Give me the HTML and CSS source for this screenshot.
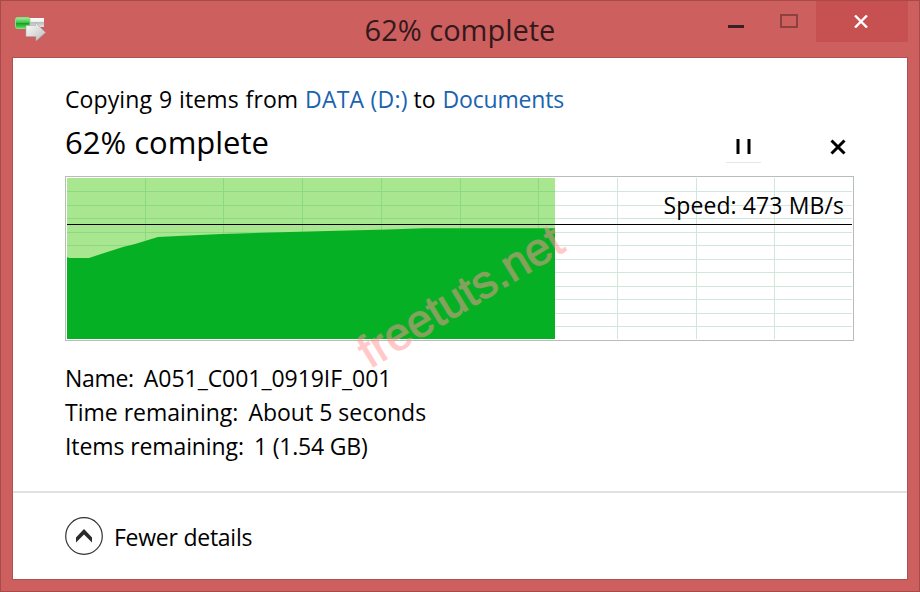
FILE: index.html
```html
<!DOCTYPE html>
<html lang="en">
<head>
<meta charset="utf-8">
<title>62% complete</title>
<link rel="stylesheet" href="styles.css">
</head>
<body>
<div class="window">
  <header class="titlebar">
    <svg class="app-icon" width="34" height="26" viewBox="0 0 34 26">
      <defs>
        <linearGradient id="green" x1="0" y1="0" x2="0" y2="1"><stop offset="0" stop-color="#a5eaa0"/><stop offset=".45" stop-color="#42c748"/><stop offset=".5" stop-color="#109b20"/><stop offset="1" stop-color="#5be264"/></linearGradient>
        <linearGradient id="silver" x1="0" y1="0" x2="0" y2="1"><stop offset="0" stop-color="#fff"/><stop offset=".45" stop-color="#eee"/><stop offset=".5" stop-color="#bdbdbd"/><stop offset="1" stop-color="#e2e2e2"/></linearGradient>
        <linearGradient id="arrow" x1="0" y1="0" x2="1" y2="1"><stop offset="0" stop-color="#fff"/><stop offset="1" stop-color="#bbb"/></linearGradient>
      </defs>
      <rect x="15" y="3" width="15" height="9" fill="url(#silver)"/>
      <rect x="1.500" y="2.500" width="14.500" height="11" rx="2" fill="url(#green)" stroke="#8edb88"/>
      <path d="M12 10.500h9.500V7.500L31.500 17.500 22 26V21.500H12z" fill="url(#arrow)" stroke="#aaa" stroke-width=".6"/>
    </svg>
    <h1 class="title">62% complete</h1>
    <div class="controls">
      <span class="control minimize"><svg width="16" height="3"><path d="M0 0h16v3H0z" fill="#3a2020"/></svg></span>
      <span class="control maximize"><svg width="18" height="14"><path d="M1 1h16v12H1z" fill="none" stroke="#8d4040" stroke-width="2"/></svg></span>
      <span class="control close"><svg width="14" height="13"><path d="M1 .5l12 12M13 .5l-12 12" fill="none" stroke="#fff" stroke-width="2.400"/></svg></span>
    </div>
  </header>
  <main class="client">
    <section class="job">
      <p class="summary"><span class="lead">Copying 9 items from </span><a class="source">DATA (D:)</a> to <a class="target">Documents</a></p>
      <div class="status">
        <h2 class="percent">62% complete</h2>
        <div class="actions">
          <span class="pause"><svg width="15" height="15"><path d="M.5 0h3v15h-3zM11.500 0h3v15h-3z"/></svg></span>
          <svg class="cancel" width="16" height="16"><path d="M1.500 1.500l13 13M14.500 1.500l-13 13" fill="none" stroke="#000" stroke-width="3"/></svg>
        </div>
      </div>
      <div class="chart">
        <svg class="plot" width="785" height="161" viewBox="67 178 785 161">
          <path class="grid" d="M67 191.500h785M67 205.500h785M67 218.500h785M67 232.500h785M67 245.500h785M67 259.500h785M67 272.500h785M67 286.500h785M67 299.500h785M67 313.500h785M67 326.500h785M145.500 178v161M223.500 178v161M302.500 178v161M381.500 178v161M460.500 178v161M538.500 178v161M617.500 178v161M696.500 178v161M774.500 178v161"/>
          <path class="elapsed" d="M67 178h488v161H67z"/>
          <path class="elapsed-grid" d="M67 191.500h488M67 205.500h488M67 218.500h488M67 232.500h488M67 245.500h488M145.500 178v161M223.500 178v161M302.500 178v161M381.500 178v161M460.500 178v161M538.500 178v161"/>
          <path class="speed-area" d="M67 257l2 1h20l12-4 22-7 12-3 23-7 20-1 43-2 50-1.500 57-1.500 60-1.500 36-1.200h131V339H67z"/>
          <path class="average" d="M67 224.500h785"/>
        </svg>
        <span class="speed">Speed: 473 MB/s</span>
        <span class="watermark">freetuts.net</span>
      </div>
      <dl class="details">
        <div class="name"><dt>Name:</dt><dd>A051_C001_0919IF_001</dd></div>
        <div class="time"><dt>Time remaining:</dt><dd>About 5 seconds</dd></div>
        <div class="items"><dt>Items remaining:</dt><dd>1 (1.54 GB)</dd></div>
      </dl>
    </section>
    <footer class="footer">
      <svg width="38" height="38" viewBox="0 0 38 38"><circle cx="19" cy="19" r="18.300" fill="#fff" stroke="#333" stroke-width="1.200"/><path d="M11 20.500L19 12l8 8.500v5L19 17.500l-8 8z" fill="#2b2b2b"/></svg>
      <span class="fewer">Fewer details</span>
    </footer>
  </main>
</div>
</body>
</html>
```
FILE: styles.css
```css
* { box-sizing: border-box; margin: 0; padding: 0; }
body { font-family: "Open Sans", "Noto Sans", sans-serif; font-size: 23px; line-height: 34px; color: #000; }
.window { width: 920px; height: 592px; background: #cd5f5f; border: 1px solid #a84a4a; padding: 0 11px 11px; display: flex; flex-direction: column; }
.titlebar { height: 56px; display: grid; grid-template-columns: 200px 1fr 200px; flex: none; }
.app-icon { margin: 14px 0 0 2px; }
.title { font-weight: 400; font-size: 29px; line-height: 58px; text-align: center; color: #33191b; white-space: nowrap; }
.controls { display: flex; justify-content: flex-end; height: 41px; }
.control { display: flex; justify-content: center; }
.minimize { width: 52px; padding-top: 24px; }
.maximize { width: 54px; padding-top: 13px; }
.close { width: 92px; background: #c75050; padding: 14px 2px 0 0; }
.client { flex: 1; min-height: 0; background: #fff; border: 1px solid #a95353; display: flex; flex-direction: column; }
.job { padding: 24px 53px 0 52px; height: 433px; flex: none; }
.summary { white-space: nowrap; height: 36px; }
.summary a { color: #1a63b0; }
.lead { letter-spacing: .1px; word-spacing: .8px; }
.source { letter-spacing: .2px; }
.target { letter-spacing: -.2px; margin-left: 1px; }
.status { display: flex; justify-content: space-between; height: 58px; }
.percent { font-weight: 400; font-size: 31px; line-height: 48px; white-space: nowrap; }
.actions { display: flex; align-items: flex-start; padding: 21px 8px 0 0; }
.pause { width: 35px; height: 24px; display: flex; justify-content: center; border-bottom: 1px solid #e6e6e6; margin-right: 69px; }
.chart { position: relative; width: 789px; height: 165px; border: 1px solid #b9bcb9; padding: 1px; background: #fff; }
.plot { display: block; }
.grid { fill: none; stroke: #d0e8dc; }
.elapsed { fill: #a8e690; }
.elapsed-grid { fill: none; stroke: #8cd983; }
.speed-area { fill: #06b025; }
.average { stroke: #000; }
.speed { position: absolute; right: 9px; top: 11px; white-space: nowrap; letter-spacing: .1px; }
.watermark { position: absolute; left: 304px; top: 151px; height: 50px; font: 46px/50px "Liberation Sans", sans-serif; color: #ff9595; -webkit-text-stroke: 1px #ff9595; opacity: .5; transform-origin: 0 41px; transform: rotate(-31.2deg); white-space: nowrap; }
.details { padding-top: 20px; }
.details div { display: flex; gap: 10px; height: 34px; white-space: nowrap; }
.name dt { letter-spacing: -.3px; }
.name dd { letter-spacing: -.05px; }
.items dt { letter-spacing: -.1px; }
.items dd { letter-spacing: -.2px; }
.footer { flex: 1; border-top: 2px solid #e1e1e1; padding: 24px 52px 0; display: flex; gap: 11px; }
.fewer { line-height: 40px; letter-spacing: -.25px; }
```
